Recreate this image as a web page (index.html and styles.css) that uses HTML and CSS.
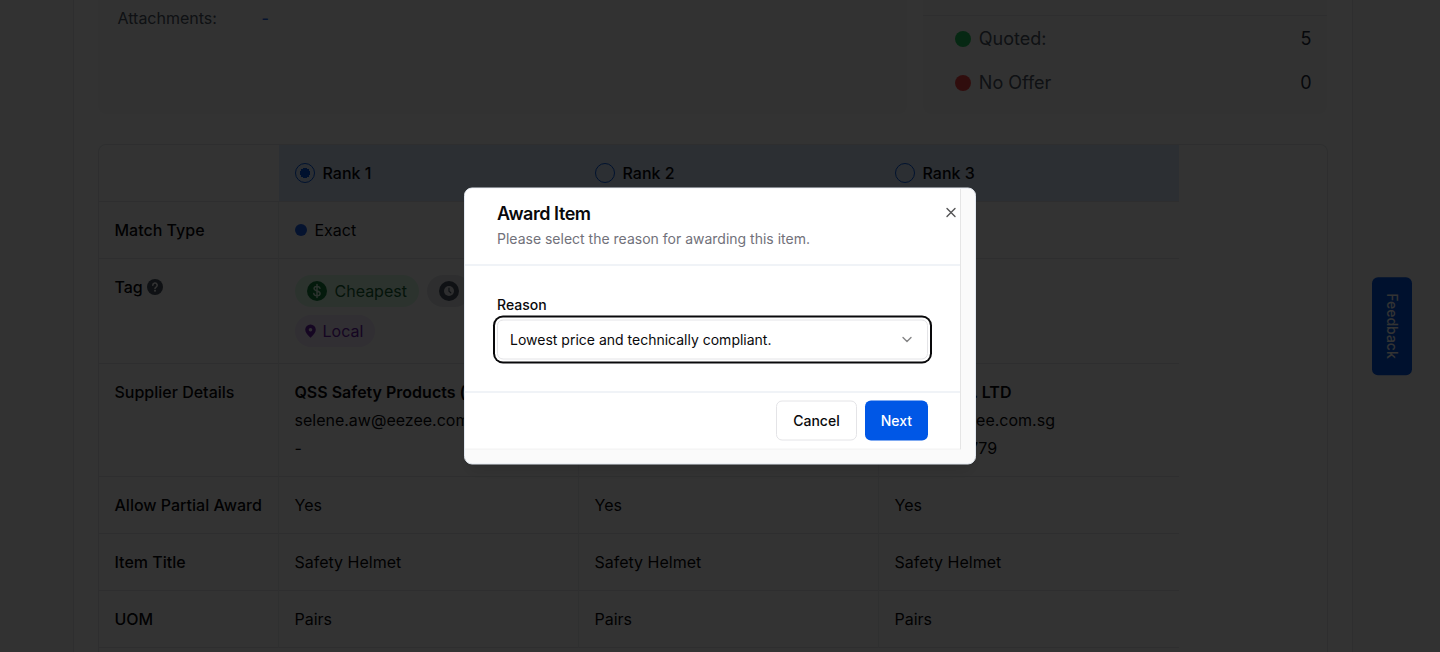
FILE: index.html
```html
<!DOCTYPE html>
<html lang="en">
<head>
  <meta charset="UTF-8">
  <meta name="viewport" content="width=device-width, initial-scale=1.0">
  <title>Award Item</title>
  <link rel="stylesheet" href="styles.css">
</head>
<body>
  <div class="page">
    <main class="container">
      <div class="cards">
        <section class="card info-card">
          <dl class="info-row">
            <dt>Attachments:</dt>
            <dd>-</dd>
          </dl>
        </section>
        <section class="card stats-card">
          <ul class="stats">
            <li><span class="dot dot-green"></span>Quoted:<span class="stat-value">5</span></li>
            <li><span class="dot dot-red"></span>No Offer<span class="stat-value">0</span></li>
          </ul>
        </section>
      </div>

      <div class="table-wrap">
        <table class="compare">
          <thead>
            <tr>
              <td></td>
              <th scope="col"><label class="rank"><input type="radio" name="rank" checked>Rank 1</label></th>
              <th scope="col"><label class="rank"><input type="radio" name="rank">Rank 2</label></th>
              <th scope="col"><label class="rank"><input type="radio" name="rank">Rank 3</label></th>
            </tr>
          </thead>
          <tbody>
            <tr>
              <th scope="row">Match Type</th>
              <td><span class="match">Exact</span></td>
              <td></td>
              <td></td>
            </tr>
            <tr>
              <th scope="row">
                <span class="tag-title">Tag
                  <svg width="16" height="16" viewBox="0 0 16 16"><circle cx="8" cy="8" r="8" fill="#4b5563"/><path d="M5.8 6.2a2.2 2.2 0 1 1 3.3 1.9c-.7.4-1.1.7-1.1 1.4" fill="none" stroke="#fff" stroke-width="1.6" stroke-linecap="round"/><circle cx="8" cy="11.7" r="1" fill="#fff"/></svg>
                </span>
              </th>
              <td>
                <div class="tags">
                  <span class="tag tag-green">
                    <svg width="20" height="20" viewBox="0 0 20 20"><circle cx="10" cy="10" r="10" fill="#15803d"/><path d="M13 7.2C12.6 6 11.5 5.4 10 5.4c-1.7 0-2.9.8-2.9 2.2 0 3.2 6 1.5 6 4.8 0 1.4-1.3 2.3-3.1 2.3-1.7 0-2.9-.8-3.2-2.1M10 3.5v13" fill="none" stroke="#dcfce7" stroke-width="1.5" stroke-linecap="round"/></svg>
                    Cheapest
                  </span>
                  <span class="tag tag-gray">
                    <svg width="20" height="20" viewBox="0 0 20 20"><circle cx="10" cy="10" r="10" fill="#4b5563"/><circle cx="10" cy="10" r="5" fill="#e5e7eb"/><path d="M10 7v3.2l1.8 1.6" fill="none" stroke="#4b5563" stroke-width="1.2" stroke-linecap="round"/></svg>
                  </span>
                  <span class="tag tag-purple">
                    <svg width="16" height="16" viewBox="0 0 16 16"><path fill-rule="evenodd" d="M7.5 1.5A5.3 5.3 0 0 0 2.2 6.8c0 2.7 2.5 5.2 5.3 8 2.8-2.8 5.3-5.3 5.3-8a5.3 5.3 0 0 0-5.3-5.3zm0 3.5a1.8 1.8 0 1 1 0 3.6 1.8 1.8 0 0 1 0-3.6z" fill="#6b21a8"/></svg>
                    Local
                  </span>
                </div>
              </td>
              <td></td>
              <td></td>
            </tr>
            <tr>
              <th scope="row">Supplier Details</th>
              <td>
                <div class="supplier">
                  <strong>QSS Safety Products (</strong>
                  <span>selene.aw@eezee.com.</span>
                  <span>-</span>
                </div>
              </td>
              <td></td>
              <td>
                <div class="supplier">
                  <strong>EEZEE Pte. LTD</strong>
                  <span>sales@eezee.com.sg</span>
                  <span>+65 6023779</span>
                </div>
              </td>
            </tr>
            <tr>
              <th scope="row">Allow Partial Award</th>
              <td>Yes</td>
              <td>Yes</td>
              <td>Yes</td>
            </tr>
            <tr>
              <th scope="row">Item Title</th>
              <td>Safety Helmet</td>
              <td>Safety Helmet</td>
              <td>Safety Helmet</td>
            </tr>
            <tr>
              <th scope="row">UOM</th>
              <td>Pairs</td>
              <td>Pairs</td>
              <td>Pairs</td>
            </tr>
          </tbody>
        </table>
      </div>
    </main>
  </div>

  <button class="feedback" type="button">Feedback</button>

  <div class="overlay"></div>

  <div class="modal" role="dialog" aria-labelledby="modal-title">
    <form class="modal-content">
      <header class="modal-header">
        <h2 id="modal-title">Award Item</h2>
        <p>Please select the reason for awarding this item.</p>
      </header>
      <div class="modal-body">
        <label for="reason">Reason</label>
        <div class="select-wrap">
          <select id="reason">
            <option>Lowest price and technically compliant.</option>
          </select>
          <svg class="chevron" width="16" height="16" viewBox="0 0 24 24" fill="none" stroke="currentColor" stroke-width="2" stroke-linecap="round" stroke-linejoin="round"><path d="m6 9 6 6 6-6"/></svg>
        </div>
      </div>
      <footer class="modal-footer">
        <button class="btn btn-outline" type="button">Cancel</button>
        <button class="btn btn-primary" type="button">Next</button>
      </footer>
    </form>
    <button class="modal-close" type="button" aria-label="Close">
      <svg width="16" height="16" viewBox="0 0 24 24" fill="none" stroke="currentColor" stroke-width="2" stroke-linecap="round" stroke-linejoin="round"><path d="M18 6 6 18M6 6l12 12"/></svg>
    </button>
  </div>
</body>
</html>
```
FILE: styles.css
```css
* {
  margin: 0;
  padding: 0;
  box-sizing: border-box;
}

body {
  font-family: Inter, "Liberation Sans", sans-serif;
  font-size: 16px;
  line-height: 24px;
  color: #09090b;
  background: #fafafa;
  height: 100vh;
  overflow: hidden;
}

button,
select {
  font: inherit;
  color: inherit;
}

.page {
  padding-right: 15px;
}

.container {
  display: flex;
  flex-direction: column;
  max-width: 1280px;
  min-height: 100vh;
  margin: 0 auto;
  padding: 0 24px;
  background: #fff;
  border: solid #e5e7eb;
  border-width: 0 1px;
}

/* summary cards */
.cards {
  display: grid;
  grid-template-columns: 2fr 1fr;
  gap: 16px;
  margin-bottom: 30px;
}

.card {
  background: #f9fafb;
  border-radius: 0 0 8px 8px;
}

.info-card {
  padding: 6px 20px;
}

.info-row {
  display: flex;
}

.info-row dt {
  width: 144px;
  color: #4b5563;
}

.info-row dd {
  color: #2563eb;
  font-weight: 500;
}

.stats-card {
  padding: 15px 0 9px;
}

.stats {
  list-style: none;
  border-top: 1px solid #e5e7eb;
  padding: 1px 16px 0 32px;
  font-size: 18px;
  color: #4b5563;
}

.stats li {
  display: flex;
  align-items: center;
  gap: 8px;
  height: 44px;
}

.stat-value {
  margin-left: auto;
  color: #1f2937;
}

.dot {
  width: 16px;
  height: 16px;
  border-radius: 50%;
}

.dot-green {
  background: #22c55e;
}

.dot-red {
  background: #ef4444;
}

/* comparison table */
.table-wrap {
  flex: 1;
  border: 1px solid #e5e7eb;
  border-bottom: 0;
  border-radius: 8px 8px 0 0;
}

.compare {
  width: 1080px;
  table-layout: fixed;
  border-collapse: separate;
  border-spacing: 0;
}

.compare th,
.compare td {
  height: 57px;
  padding: 16px;
  border-bottom: 1px solid #e5e7eb;
  text-align: left;
  vertical-align: top;
  font-weight: 400;
}

.compare tr > :first-child {
  width: 180px;
}

.compare tbody th,
.compare tbody td:not(:last-child) {
  border-right: 1px solid #eceef1;
}

.compare th {
  font-weight: 500;
  white-space: nowrap;
}

.compare thead th {
  background: #dbeafe;
}

.rank {
  display: flex;
  align-items: center;
  gap: 8px;
}

.rank input {
  appearance: none;
  width: 20px;
  height: 20px;
  border: 1px solid #0057e6;
  border-radius: 50%;
}

.rank input:checked {
  background: radial-gradient(circle, #0057e6 5px, transparent 5px);
}

.match {
  display: flex;
  align-items: center;
  gap: 8px;
}

.match::before {
  content: '';
  width: 12px;
  height: 12px;
  border-radius: 50%;
  background: #1d5fe8;
}

.tag-title {
  display: flex;
  align-items: center;
  gap: 4px;
}

.tags {
  display: flex;
  flex-wrap: wrap;
  gap: 8px;
  max-width: 200px;
}

.tag {
  display: flex;
  align-items: center;
  gap: 8px;
  height: 32px;
  padding: 0 12px;
  border-radius: 16px;
}

.tag-green {
  background: #dcfce7;
  color: #166534;
}

.tag-gray {
  background: #e5e7eb;
  color: #374151;
}

.tag-purple {
  gap: 4px;
  padding-left: 8px;
  background: #f3e8ff;
  color: #6b21a8;
}

.supplier {
  display: flex;
  flex-direction: column;
  gap: 4px;
}

.supplier strong {
  font-weight: 600;
  white-space: nowrap;
}

.feedback {
  position: fixed;
  top: 50%;
  right: 28px;
  transform: translateY(-50%);
  width: 40px;
  padding: 16px 0;
  writing-mode: vertical-rl;
  font-size: 14px;
  font-weight: 500;
  color: #fff;
  background: #0057e6;
  border: 0;
  border-radius: 6px;
}

/* dialog */
.overlay {
  position: fixed;
  inset: 0;
  background: rgba(0, 0, 0, 0.8);
}

.modal {
  position: fixed;
  top: 50%;
  left: 50%;
  transform: translate(-50%, -50%);
  width: 100%;
  max-width: 512px;
  padding: 0 14px 14px 0;
  font-size: 14px;
  line-height: 20px;
  background: #fafafa;
  border: 1px solid #e2e8f0;
  border-radius: 8px;
  box-shadow: 0 10px 15px -3px rgba(0, 0, 0, 0.1), 0 4px 6px -4px rgba(0, 0, 0, 0.1);
}

.modal-content {
  background: #fff;
  border: solid #e5e5e5;
  border-width: 0 1px 1px 0;
  border-top-left-radius: 7px;
}

.modal-header {
  padding: 16px 32px;
  border-bottom: 1px solid #e2e8f0;
}

.modal-header h2 {
  margin-bottom: 6px;
  font-size: 18px;
  line-height: 18px;
  font-weight: 600;
  letter-spacing: -0.025em;
}

.modal-header p {
  color: #71717a;
}

.modal-body {
  padding: 32px;
}

.modal-body label {
  display: block;
  margin-bottom: 8px;
  line-height: 14px;
  font-weight: 500;
}

.select-wrap {
  display: grid;
  align-items: center;
}

.select-wrap select,
.chevron {
  grid-area: 1 / 1;
}

.select-wrap select {
  appearance: none;
  width: 100%;
  height: 40px;
  padding: 0 12px;
  background: #fff;
  border: 1px solid #e4e4e7;
  border-radius: 6px;
  box-shadow: 0 0 0 2px #fff, 0 0 0 4px #09090b;
  outline: none;
}

.chevron {
  justify-self: end;
  margin-right: 13px;
  opacity: 0.5;
  pointer-events: none;
}

.modal-footer {
  display: flex;
  justify-content: flex-end;
  gap: 8px;
  padding: 8px 32px;
  border-top: 1px solid #e2e8f0;
}

.btn {
  height: 40px;
  padding: 0 16px;
  font-weight: 500;
  border: 0;
  border-radius: 6px;
}

.btn-outline {
  background: #fff;
  border: 1px solid #e4e4e7;
}

.btn-primary {
  background: #0057e6;
  color: #fff;
}

.modal-close {
  position: absolute;
  top: 16px;
  right: 16px;
  display: flex;
  background: none;
  border: 0;
  opacity: 0.7;
}
```
